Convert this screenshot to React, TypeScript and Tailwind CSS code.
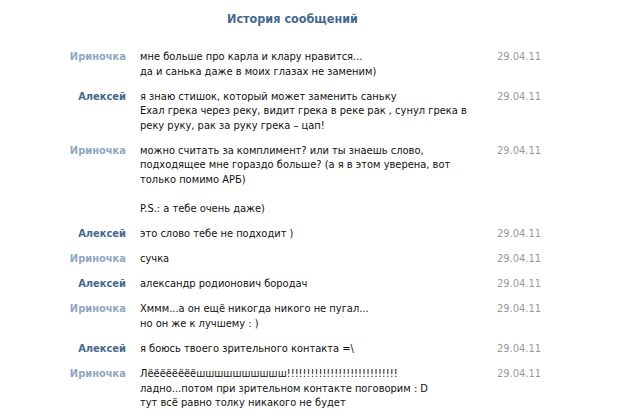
import { FC } from "react";

interface Msg {
  from: "alex" | "ira";
  text: string;
  date: string;
}

const messages: Msg[] = [
  {
    from: "ira",
    text: "мне больше про карла и клару нравится...\nда и санька даже в моих глазах не заменим)",
    date: "29.04.11",
  },
  {
    from: "alex",
    text: "я знаю стишок, который может заменить саньку\nЕхал грека через реку, видит грека в реке рак , сунул грека в реку руку, рак за руку грека – цап!",
    date: "29.04.11",
  },
  {
    from: "ira",
    text: "можно считать за комплимент? или ты знаешь слово, подходящее мне гораздо больше? (а я в этом уверена, вот только помимо АРБ)\n\nP.S.: а тебе очень даже)",
    date: "29.04.11",
  },
  { from: "alex", text: "это слово тебе не подходит )", date: "29.04.11" },
  { from: "ira", text: "сучка", date: "29.04.11" },
  { from: "alex", text: "александр родионович бородач", date: "29.04.11" },
  {
    from: "ira",
    text: "Хммм...а он ещё никогда никого не пугал...\nно он же к лучшему : )",
    date: "29.04.11",
  },
  { from: "alex", text: "я боюсь твоего зрительного контакта =\\", date: "29.04.11" },
  {
    from: "ira",
    text: "Лёёёёёёёёшшшшшшшшшш!!!!!!!!!!!!!!!!!!!!!!!!!!!!\nладно...потом при зрительном контакте поговорим : D\nтут всё равно толку никакого не будет",
    date: "29.04.11",
  },
];

const App: FC = () => {
  return (
    <div className="w-[621px] h-[420px] bg-white overflow-hidden font-['DejaVu_Sans_Condensed','DejaVu_Sans',sans-serif] text-[11px] text-[#111]">
      <h1 className="pt-[11px] h-[45px] pl-[227px] text-[12.5px] font-bold text-[#45688e] leading-[16px]">
        История сообщений
      </h1>
      <div className="flex flex-col">
        {messages.map((m, i) => (
          <div key={i} className="flex items-start py-[5.3px] leading-[14.5px]">
            <div
              className={
                m.from === "alex"
                  ? "w-[126px] shrink-0 text-right font-bold text-[#45688e]"
                  : "w-[126px] shrink-0 text-right font-bold text-[#8fa7c2]"
              }
            >
              {m.from === "alex" ? "Алексей" : "Ириночка"}
            </div>
            <div className="ml-[14px] w-[330px] shrink-0 whitespace-pre-line">{m.text}</div>
            <div className="ml-[27px] text-[#999999]">{m.date}</div>
          </div>
        ))}
      </div>
    </div>
  );
};

export default App;
